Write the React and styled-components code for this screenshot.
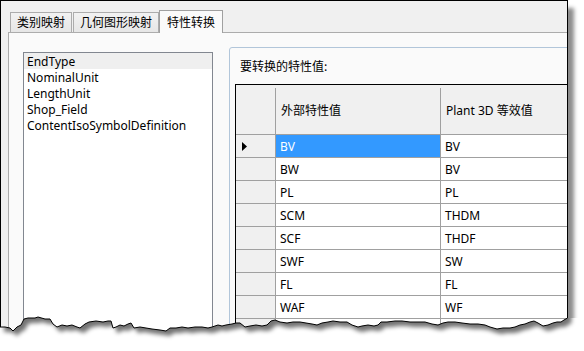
import React from "react";
import styled, { createGlobalStyle } from "styled-components";

const Global = createGlobalStyle`
  html, body { margin: 0; padding: 0; background: #fff; }
  body { font-family: "Noto Sans", "Noto Sans CJK SC", sans-serif; font-size: 12px; color: #000; }
`;

const LATIN = `"Noto Sans", "Noto Sans CJK SC", sans-serif`;
const CJK = `"Noto Sans CJK SC", "Noto Sans", sans-serif`;

const Stage = styled.div`
  position: relative;
  width: 584px;
  height: 351px;
  overflow: hidden;
  background: #fff;
`;

const Window = styled.div`
  width: 568px;
  height: 351px;
  box-sizing: border-box;
  border: 1px solid #000;
  border-bottom: none;
  background: #f0f0f0;
  box-shadow: 6px 8px 4px rgba(0, 0, 0, 0.45);
  padding: 9px 0 0 7px;
  display: flex;
  flex-direction: column;
  overflow: hidden;
`;

const TabStrip = styled.div`
  display: flex;
  align-items: flex-end;
  height: 24px;
  margin-bottom: -1px;
  padding-left: 2px;
  position: relative;
  z-index: 1;
`;

const Tab = styled.div`
  box-sizing: border-box;
  height: ${(p) => (p.$active ? "23px" : "20px")};
  margin-bottom: ${(p) => (p.$active ? "0" : "1px")};
  padding: 0 ${(p) => (p.$active ? "7px" : "6px")};
  border: 1px solid ${(p) => (p.$active ? "#a0a0a0" : "#acacac")};
  border-bottom: none;
  background: ${(p) =>
    p.$active ? "#fafafa" : "linear-gradient(#f2f2f2, #e6e6e6)"};
  font-family: ${CJK};
  font-size: 12px;
  line-height: ${(p) => (p.$active ? "22px" : "18px")};
  white-space: nowrap;
  margin-right: ${(p) => (p.$gap ? "1px" : "0")};
`;

const Panel = styled.div`
  flex: 1;
  width: 600px;
  box-sizing: border-box;
  border: 1px solid #acacac;
  background: #fafafa;
  display: flex;
  align-items: flex-start;
  gap: 16px;
  padding: 14px 0 0 14px;
`;

const ListBox = styled.div`
  width: 190px;
  height: 300px;
  box-sizing: border-box;
  margin-top: 5px;
  border: 1px solid #828790;
  background: #fff;
  flex: none;
`;

const ListItem = styled.div`
  height: 16px;
  line-height: 17px;
  padding-left: 3px;
  font-family: ${LATIN};
  font-size: 12px;
  background: ${(p) => (p.$selected ? "#efefef" : "transparent")};
  white-space: nowrap;
`;

const GroupBox = styled.div`
  width: 400px;
  height: 300px;
  box-sizing: border-box;
  border: 1px solid #b2c6da;
  border-radius: 3px;
  padding-left: 5px;
  flex: none;
`;

const GroupLabel = styled.div`
  padding: 10px 0 10px 5px;
  line-height: 16px;
  font-family: ${CJK};
  font-size: 12px;
`;

const Grid = styled.div`
  display: grid;
  grid-template-columns: 39px 165px 200px;
  grid-template-rows: 50px;
  grid-auto-rows: 23px;
  border-top: 1px solid #000;
  border-left: 1px solid #000;
  background: #fff;
`;

const HeaderCorner = styled.div`
  background: #f0f0f0;
  border-bottom: 1px solid #a0a0a0;
  box-sizing: border-box;
`;

const HeaderCell = styled.div`
  position: relative;
  box-sizing: border-box;
  background: #f0f0f0;
  border-bottom: 1px solid #a0a0a0;
  padding-left: 6px;
  display: flex;
  align-items: center;
  font-family: ${(p) => (p.$latin ? LATIN : CJK)};
  font-size: 12px;
  white-space: nowrap;
  &::before {
    content: "";
    position: absolute;
    left: 0;
    top: 3px;
    bottom: 0;
    width: 1px;
    background: #a0a0a0;
  }
`;

const RowHeader = styled.div`
  box-sizing: border-box;
  background: #f0f0f0;
  border-bottom: 1px solid #a0a0a0;
  display: flex;
  align-items: center;
  padding-left: 6px;
`;

const Cell = styled.div`
  box-sizing: border-box;
  border-left: 1px solid #a0a0a0;
  border-bottom: 1px solid #a0a0a0;
  padding-left: 4px;
  padding-top: 1px;
  display: flex;
  align-items: center;
  font-family: ${LATIN};
  font-size: 12px;
  background: ${(p) => (p.$selected ? "#3399ff" : "#fff")};
  color: ${(p) => (p.$selected ? "#fff" : "#000")};
  white-space: nowrap;
`;

const TornEdge = styled.svg`
  position: absolute;
  left: 0;
  top: 0;
  pointer-events: none;
`;

const edge = [
  [0, 327], [5, 327], [10, 328], [13, 331], [17, 327], [21, 325], [24, 319], [28, 318], [35, 318],
  [38, 317], [45, 319], [50, 319], [53, 324], [57, 327], [62, 325], [67, 326], [72, 325], [77, 327],
  [80, 328], [85, 324], [89, 322], [96, 321], [103, 322], [108, 321], [111, 321], [113, 328],
  [116, 327], [120, 325], [124, 326], [128, 324], [131, 323], [134, 328], [140, 327], [146, 328],
  [152, 329], [160, 330], [166, 331], [170, 328], [176, 328], [182, 327], [188, 328], [195, 327],
  [202, 327], [208, 328], [212, 327], [218, 325], [222, 326], [226, 325], [232, 324], [236, 323],
  [240, 323], [245, 327], [250, 326], [256, 325], [262, 326], [267, 325], [271, 321], [275, 320],
  [280, 322], [287, 323], [293, 322], [300, 322], [306, 323], [312, 324], [317, 325], [322, 323],
  [328, 322], [333, 321], [340, 322], [347, 322], [352, 325], [358, 327], [362, 326], [368, 325],
  [374, 326], [378, 325], [381, 322], [387, 322], [395, 321], [402, 321], [410, 322], [418, 322],
  [425, 322], [432, 324], [438, 325], [443, 323], [448, 322], [455, 322], [462, 323], [470, 324],
  [478, 324], [485, 325], [490, 327], [497, 329], [503, 328], [510, 328], [515, 327], [520, 325],
  [525, 324], [530, 322], [534, 321], [538, 323], [543, 326], [548, 325], [553, 323], [557, 322],
  [561, 322], [564, 320], [567.5, 318],
];

const edgeStr = edge.map(([x, y]) => `${x},${y}`).join(" ");
const belowPts = `${edgeStr} 584,318 584,351 0,351`;
const abovePts = `0,0 567.5,0 ${edge
  .slice()
  .reverse()
  .map(([x, y]) => `${x},${y}`)
  .join(" ")}`;

function Torn() {
  return (
    <TornEdge width="584" height="351" viewBox="0 0 584 351">
      <defs>
        <clipPath id="below">
          <polygon points={belowPts} />
        </clipPath>
        <filter id="blur" x="-10%" y="-10%" width="120%" height="120%">
          <feGaussianBlur stdDeviation="2" />
        </filter>
      </defs>
      <polygon points={belowPts} fill="#fff" />
      <g clipPath="url(#below)">
        <polygon
          points={abovePts}
          transform="translate(4 5)"
          fill="rgba(0,0,0,0.55)"
          filter="url(#blur)"
        />
      </g>
      <polyline points={edgeStr} fill="none" stroke="#000" strokeWidth="1" />
    </TornEdge>
  );
}

const Arrow = () => (
  <svg width="5" height="9" viewBox="0 0 5 9">
    <polygon points="0,0 5,4.5 0,9" fill="#000" />
  </svg>
);

const items = ["EndType", "NominalUnit", "LengthUnit", "Shop_Field", "ContentIsoSymbolDefinition"];
const rows = [
  ["BV", "BV"],
  ["BW", "BV"],
  ["PL", "PL"],
  ["SCM", "THDM"],
  ["SCF", "THDF"],
  ["SWF", "SW"],
  ["FL", "FL"],
  ["WAF", "WF"],
  ["", ""],
];

export default function App() {
  return (
    <>
      <Global />
      <Stage>
        <Window>
          <TabStrip>
            <Tab $gap>类别映射</Tab>
            <Tab>几何图形映射</Tab>
            <Tab $active>特性转换</Tab>
          </TabStrip>
          <Panel>
            <ListBox>
              {items.map((t, i) => (
                <ListItem key={t} $selected={i === 0}>
                  {t}
                </ListItem>
              ))}
            </ListBox>
            <GroupBox>
              <GroupLabel>要转换的特性值:</GroupLabel>
              <Grid>
                <HeaderCorner />
                <HeaderCell>外部特性值</HeaderCell>
                <HeaderCell $latin>Plant 3D 等效值</HeaderCell>
                {rows.map(([a, b], i) => (
                  <React.Fragment key={i}>
                    <RowHeader>{i === 0 && <Arrow />}</RowHeader>
                    <Cell $selected={i === 0}>{a}</Cell>
                    <Cell>{b}</Cell>
                  </React.Fragment>
                ))}
              </Grid>
            </GroupBox>
          </Panel>
        </Window>
        <Torn />
      </Stage>
    </>
  );
}
